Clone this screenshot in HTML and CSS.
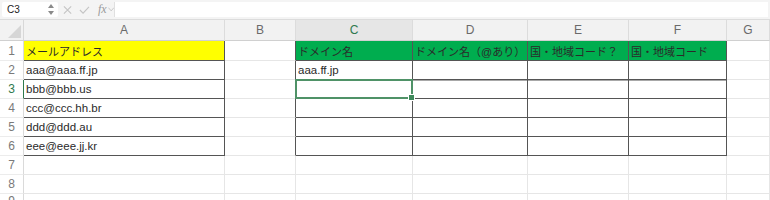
FILE: index.html
```html
<!DOCTYPE html>
<html lang="ja">
  <head>
    <meta charset="UTF-8" />
    <meta name="viewport" content="width=device-width, initial-scale=1.0" />
    <title>Sheet</title>
    <link rel="stylesheet" href="styles.css">
  </head>
  <body>
    <div class="formula-bar">
      <div class="name-box">
        <span class="cell-ref">C3</span>
        <span class="spin">
          <svg width="6" height="11" viewBox="0 0 6 11">
            <path d="M0 4L3 0L6 4Z M0 7L3 11L6 7Z" fill="#8a8a8a"></path>
          </svg>
        </span>
      </div>
      <div class="fx-tools">
        <svg class="tool" width="10" height="10" viewBox="0 0 10 10">
          <path d="M1 1L9 9M9 1L1 9" stroke="#c4c4c4" stroke-width="1.2"></path>
        </svg>
        <svg class="tool" width="12" height="10" viewBox="0 0 12 10">
          <path d="M1 5L4.5 8.5L11 1.5" stroke="#c4c4c4" stroke-width="1.2" fill="none"></path>
        </svg>
        <span class="fx">fx</span>
        <svg class="chev" width="7" height="5" viewBox="0 0 7 5">
          <path d="M0.5 0.5L3.5 4L6.5 0.5" stroke="#c4c4c4" fill="none"></path>
        </svg>
      </div>
      <div class="formula-input"></div>
    </div>

    <div class="sheet">
      <!-- column headers -->
      <div class="corner"><span class="tri"></span></div>
      <div class="col-head">A</div>
      <div class="col-head">B</div>
      <div class="col-head active">C</div>
      <div class="col-head">D</div>
      <div class="col-head">E</div>
      <div class="col-head">F</div>
      <div class="col-head">G</div>

      <!-- row 1 -->
      <div class="row-head">1</div>
      <div class="cell bx yellow jp">メールアドレス</div>
      <div class="cell bl"></div>
      <div class="cell bx green jp">ドメイン名</div>
      <div class="cell bx green jp">ドメイン名（@あり）</div>
      <div class="cell bx green jp">国・地域コード？</div>
      <div class="cell bx green jp">国・地域コード</div>
      <div class="cell"></div>

      <!-- row 2 -->
      <div class="row-head">2</div>
      <div class="cell bx">aaa@aaa.ff.jp</div>
      <div class="cell bl"></div>
      <div class="cell bx">aaa.ff.jp</div>
      <div class="cell bx"></div>
      <div class="cell bx"></div>
      <div class="cell bx"></div>
      <div class="cell"></div>

      <!-- row 3 -->
      <div class="row-head active">3</div>
      <div class="cell bx">bbb@bbb.us</div>
      <div class="cell bl"></div>
      <div class="cell bx selected"></div>
      <div class="cell bx shade"></div>
      <div class="cell bx shade"></div>
      <div class="cell bx shade"></div>
      <div class="cell"></div>

      <!-- row 4 -->
      <div class="row-head">4</div>
      <div class="cell bx">ccc@ccc.hh.br</div>
      <div class="cell bl"></div>
      <div class="cell bx"></div>
      <div class="cell bx"></div>
      <div class="cell bx"></div>
      <div class="cell bx"></div>
      <div class="cell"></div>

      <!-- row 5 -->
      <div class="row-head">5</div>
      <div class="cell bx">ddd@ddd.au</div>
      <div class="cell bl"></div>
      <div class="cell bx"></div>
      <div class="cell bx"></div>
      <div class="cell bx"></div>
      <div class="cell bx"></div>
      <div class="cell"></div>

      <!-- row 6 -->
      <div class="row-head">6</div>
      <div class="cell bx">eee@eee.jj.kr</div>
      <div class="cell bl"></div>
      <div class="cell bx"></div>
      <div class="cell bx"></div>
      <div class="cell bx"></div>
      <div class="cell bx"></div>
      <div class="cell"></div>

      <!-- rows 7-9 -->
      <div class="row-head">7</div>
      <div class="cell"></div><div class="cell"></div><div class="cell"></div>
      <div class="cell"></div><div class="cell"></div><div class="cell"></div>
      <div class="cell"></div>

      <div class="row-head">8</div>
      <div class="cell"></div><div class="cell"></div><div class="cell"></div>
      <div class="cell"></div><div class="cell"></div><div class="cell"></div>
      <div class="cell"></div>

      <div class="row-head">9</div>
      <div class="cell"></div><div class="cell"></div><div class="cell"></div>
      <div class="cell"></div><div class="cell"></div><div class="cell"></div>
      <div class="cell"></div>
    </div>
  </body>
</html>
```

FILE: styles.css
```css
* {
  box-sizing: border-box;
}

body {
  margin: 0;
  background: #ffffff;
  font-family: "Liberation Sans", "Noto Sans CJK JP", sans-serif;
  color: #2a2a2a;
  overflow: hidden;
}

.formula-bar {
  display: flex;
  align-items: center;
  height: 20px;
  padding: 2px 2px 2px 2px;
  background: #f4f4f4;
  border-bottom: 1px solid #dcdcdc;
}

.name-box {
  display: flex;
  align-items: center;
  justify-content: space-between;
  width: 56px;
  height: 15px;
  padding: 0 4px 0 5px;
  background: #ffffff;
  border-radius: 2px;
}

.cell-ref {
  font-size: 10px;
  color: #222222;
}

.spin {
  display: flex;
}

.fx-tools {
  display: flex;
  align-items: center;
  gap: 7px;
  width: 56px;
  padding-left: 5px;
}

.tool {
  display: block;
}

.fx {
  font-family: "Liberation Serif", serif;
  font-style: italic;
  font-size: 12px;
  color: #9a9a9a;
  margin-left: 1px;
}

.chev {
  margin-left: -6px;
}

.formula-input {
  flex: 1;
  height: 15px;
  background: #ffffff;
  border-left: 1px solid #e0e0e0;
}

.sheet {
  display: grid;
  grid-template-columns: 24px 201px 71px 117px 115px 101px 98px 1fr;
  grid-template-rows: 21px 20px repeat(7, 19px) 14px;
}

.corner {
  position: relative;
  background: #f2f2f2;
  border-right: 1px solid #d8d8d8;
  border-bottom: 1px solid #d0d0d0;
}

.tri {
  position: absolute;
  right: 2px;
  bottom: 2px;
  width: 0;
  height: 0;
  border-left: 13px solid transparent;
  border-bottom: 13px solid #d6d6d6;
}

.col-head {
  display: flex;
  align-items: center;
  justify-content: center;
  font-size: 12px;
  color: #6a6a6a;
  background: #f2f2f2;
  border-right: 1px solid #dcdcdc;
  border-bottom: 1px solid #d0d0d0;
}

.col-head.active {
  background: #e6e6e6;
  color: #2f7a4e;
}

.row-head {
  display: flex;
  align-items: center;
  justify-content: center;
  font-size: 12px;
  color: #7a7a7a;
  border-right: 1px solid #dadada;
  border-bottom: 1px solid #ececec;
}

.row-head.active {
  color: #2f7a4e;
  border-right-color: #2f7a4e;
}

.cell {
  display: flex;
  align-items: center;
  padding-left: 2px;
  font-size: 11.5px;
  white-space: nowrap;
  overflow: visible;
  border-right: 1px solid #e6e6e6;
  border-bottom: 1px solid #e6e6e6;
}

.cell.jp {
  font-size: 11px;
}

.cell.bx {
  border-right-color: #555555;
  border-bottom-color: #555555;
}

.cell.bl {
  border-right-color: #555555;
}

.cell.yellow {
  background: #ffff00;
}

.cell.green {
  background: #00ad4f;
}

.cell.shade {
  box-shadow: inset 0 1px 0 #a8a8a8;
}

.cell.selected {
  position: relative;
}

.cell.selected::after {
  content: "";
  position: absolute;
  left: -1px;
  top: -1px;
  right: -1px;
  bottom: -1px;
  border: 2px solid #4f9267;
}

.cell.selected::before {
  content: "";
  position: absolute;
  right: -3px;
  bottom: -3px;
  width: 5px;
  height: 5px;
  background: #3f8a5c;
  border: 1px solid #ffffff;
  z-index: 1;
}
```
